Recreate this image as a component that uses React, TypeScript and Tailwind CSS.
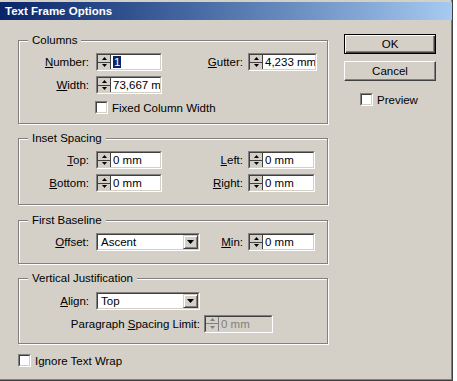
import type { ReactNode } from 'react'

// mnemonic label: one char underlined
function Mn({ text, u }: { text: string; u: number }) {
  return (
    <>
      {text.slice(0, u)}
      <span className="underline decoration-1 underline-offset-[1px]">{text[u]}</span>
      {text.slice(u + 1)}
    </>
  )
}

function Sunken({ className, children }: { className: string; children?: ReactNode }) {
  return (
    <div className={`border border-t-[#808080] border-l-[#808080] border-b-white border-r-white ${className}`}>
      <div className="flex h-full w-full border border-t-[#404040] border-l-[#404040] border-b-[#d4d0c8] border-r-[#d4d0c8]">
        {children}
      </div>
    </div>
  )
}

function Arrow({ up, color }: { up?: boolean; color: string }) {
  return (
    <svg width="5" height="3" viewBox="0 0 5 3">
      <path d={up ? 'M2.5 0L5 3H0z' : 'M0 0h5L2.5 3z'} fill={color} />
    </svg>
  )
}

function Spinner({ className, value, selected, disabled }: { className: string; value: string; selected?: boolean; disabled?: boolean }) {
  const ink = disabled ? '#808080' : '#000'
  return (
    <Sunken className={`h-[18px] ${className}`}>
      <div className={`flex w-[13px] flex-col border-r bg-[#d4d0c8] ${disabled ? 'border-r-[#808080]' : 'border-r-[#404040]'}`}>
        <div className={`flex flex-1 items-center justify-center border-b ${disabled ? 'border-b-[#808080]' : 'border-b-[#404040]'}`}>
          <Arrow up color={ink} />
        </div>
        <div className="flex flex-1 items-center justify-center">
          <Arrow color={ink} />
        </div>
      </div>
      <div className={`flex-1 overflow-hidden whitespace-nowrap pl-[2px] leading-[14px] ${disabled ? 'bg-[#d4d0c8] text-[#808080]' : 'bg-white'}`}>
        {selected ? <span className="bg-[#0a246a] px-[1px] text-white">{value}</span> : value}
      </div>
    </Sunken>
  )
}

function Dropdown({ className, value }: { className: string; value: string }) {
  return (
    <Sunken className={`h-[18px] ${className}`}>
      <div className="flex-1 bg-white pl-[3px] leading-[14px]">{value}</div>
      <div className="flex w-[15px] items-center justify-center border border-t-[#d4d0c8] border-l-[#d4d0c8] border-b-[#404040] border-r-[#404040] bg-[#d4d0c8] shadow-[inset_1px_1px_0_#fff,inset_-1px_-1px_0_#808080]">
        <svg width="7" height="4" viewBox="0 0 7 4">
          <path d="M0 0h7L3.5 4z" fill="#000" />
        </svg>
      </div>
    </Sunken>
  )
}

function CheckBox() {
  return (
    <Sunken className="h-[13px] w-[13px]">
      <div className="flex-1 bg-white" />
    </Sunken>
  )
}

function Group({ title, className, children }: { title: string; className: string; children: ReactNode }) {
  return (
    <div className={`relative w-[310px] border border-[#808080] shadow-[1px_1px_0_#fff,inset_1px_1px_0_#fff] ${className}`}>
      <span className="absolute -top-[8px] left-[9px] bg-[#d4d0c8] px-[4px] leading-[14px]">{title}</span>
      {children}
    </div>
  )
}

function Label({ className, text, u = 0 }: { className: string; text: string; u?: number }) {
  return (
    <span className={`text-right ${className}`}>
      <Mn text={text} u={u} />
    </span>
  )
}

export default function App() {
  return (
    <div className="min-h-screen bg-white font-['Liberation_Sans',Arial,sans-serif] text-[11.5px] leading-[14px] text-black">
      <div className="h-[381px] w-[453px] border-r border-b border-r-[#404040] border-b-[#404040] bg-[#d4d0c8] pt-[2px] shadow-[inset_-1px_-1px_0_#808080]">
        {/* Title bar */}
        <div className="h-[18px] bg-linear-to-r from-[#0a246a] to-[#a6caf0] pl-[5px] text-[11.5px] font-bold leading-[18px] text-white">
          Text Frame Options
        </div>

        <div className="flex">
          {/* Left column */}
          <div className="w-[328px] pl-[18px] pt-[20px]">
            <Group title="Columns" className="h-[84px] pt-[12px]">
              <div className="flex h-[18px] items-center">
                <Label className="w-[70px]" text="Number:" />
                <Spinner className="ml-[7px] w-[66px]" value="1" selected />
                <Label className="w-[81px]" text="Gutter:" />
                <Spinner className="ml-[5px] w-[69px]" value="4,233 mm" />
              </div>
              <div className="mt-[5px] flex h-[18px] items-center">
                <Label className="w-[70px]" text="Width:" />
                <Spinner className="ml-[7px] w-[66px]" value="73,667 mm" />
              </div>
              <div className="mt-[7px] flex h-[13px] items-center pl-[76px]">
                <CheckBox />
                <span className="ml-[4px]">Fixed Column Width</span>
              </div>
            </Group>

            <Group title="Inset Spacing" className="mt-[14px] h-[67px] pt-[12px]">
              <div className="flex h-[18px] items-center">
                <Label className="w-[70px]" text="Top:" />
                <Spinner className="ml-[7px] w-[66px]" value="0 mm" />
                <Label className="w-[81px]" text="Left:" />
                <Spinner className="ml-[5px] w-[67px]" value="0 mm" />
              </div>
              <div className="mt-[5px] flex h-[18px] items-center">
                <Label className="w-[70px]" text="Bottom:" />
                <Spinner className="ml-[7px] w-[66px]" value="0 mm" />
                <Label className="w-[81px]" text="Right:" />
                <Spinner className="ml-[5px] w-[67px]" value="0 mm" />
              </div>
            </Group>

            <Group title="First Baseline" className="mt-[15px] h-[44px] pt-[12px]">
              <div className="flex h-[18px] items-center">
                <Label className="w-[70px]" text="Offset:" />
                <Dropdown className="ml-[7px] w-[104px]" value="Ascent" />
                <Label className="w-[43px]" text="Min:" />
                <Spinner className="ml-[5px] w-[67px]" value="0 mm" />
              </div>
            </Group>

            <Group title="Vertical Justification" className="mt-[14px] h-[66px] pt-[13px]">
              <div className="flex h-[18px] items-center">
                <Label className="w-[70px]" text="Align:" />
                <Dropdown className="ml-[7px] w-[104px]" value="Top" />
              </div>
              <div className="mt-[4px] flex h-[19px] items-center">
                <Label className="w-[181px]" text="Paragraph Spacing Limit:" u={10} />
                <Spinner className="ml-[4px] w-[69px]" value="0 mm" disabled />
              </div>
            </Group>

            <div className="mt-[10px] flex h-[13px] items-center">
              <CheckBox />
              <span className="ml-[4px]">Ignore Text Wrap</span>
            </div>
          </div>

          {/* Right column */}
          <div className="ml-[16px] w-[92px] pt-[14px]">
            <div className="flex h-[20px] items-center justify-center border border-black bg-[#d4d0c8] shadow-[inset_1px_1px_0_#fff,inset_-1px_-1px_0_#404040,inset_-2px_-2px_0_#808080]">
              OK
            </div>
            <div className="mt-[7px] flex h-[20px] items-center justify-center border border-t-white border-l-white border-b-[#404040] border-r-[#404040] bg-[#d4d0c8] shadow-[inset_-1px_-1px_0_#808080]">
              Cancel
            </div>
            <div className="mt-[12px] flex h-[13px] items-center pl-[16px]">
              <CheckBox />
              <span className="ml-[4px]">Preview</span>
            </div>
          </div>
        </div>
      </div>
    </div>
  )
}
